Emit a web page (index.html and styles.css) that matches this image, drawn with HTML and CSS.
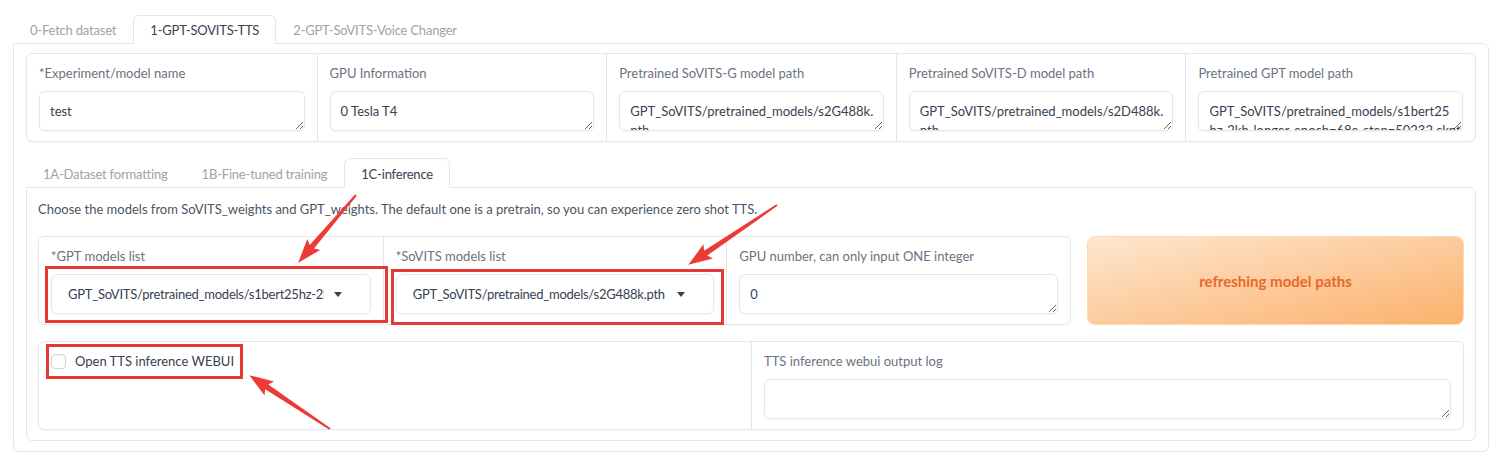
FILE: index.html
```html
<!DOCTYPE html>
<html lang="en">
<head>
  <meta charset="UTF-8" />
  <title>GPT-SoVITS WebUI</title>
  <link rel="stylesheet" href="styles.css">
</head>
<body>
  <div class="tab-nav">
    <button class="tab">0-Fetch dataset</button>
    <button class="tab selected">1-GPT-SOVITS-TTS</button>
    <button class="tab">2-GPT-SoVITS-Voice Changer</button>
  </div>

  <div class="tab-panel outer">
    <div class="block cols-5">
      <div class="field">
        <label>*Experiment/model name</label>
        <textarea>test</textarea>
      </div>
      <div class="field">
        <label>GPU Information</label>
        <textarea>0 Tesla T4</textarea>
      </div>
      <div class="field">
        <label>Pretrained SoVITS-G model path</label>
        <textarea>GPT_SoVITS/pretrained_models/s2G488k.
pth</textarea>
      </div>
      <div class="field">
        <label>Pretrained SoVITS-D model path</label>
        <textarea>GPT_SoVITS/pretrained_models/s2D488k.
pth</textarea>
      </div>
      <div class="field">
        <label>Pretrained GPT model path</label>
        <textarea>GPT_SoVITS/pretrained_models/s1bert25
hz-2kh-longer-epoch=68e-step=50232.ckpt</textarea>
      </div>
    </div>

    <div class="tab-nav inner-nav">
      <button class="tab">1A-Dataset formatting</button>
      <button class="tab">1B-Fine-tuned training</button>
      <button class="tab selected">1C-inference</button>
    </div>

    <div class="tab-panel inner">
      <p class="desc">Choose the models from SoVITS_weights and GPT_weights. The default one is a pretrain, so you can experience zero shot TTS.</p>

      <div class="model-row">
        <div class="block cols-3">
          <div class="field">
            <label>*GPT models list</label>
            <div class="dropdown">
              <span class="value">GPT_SoVITS/pretrained_models/s1bert25hz-2kh-longer-epoch=68e-step=50232.ckpt</span>
              <svg class="caret" width="8" height="5" viewBox="0 0 8 5"><path d="M0 0h8L4 5z" fill="#374151"/></svg>
            </div>
          </div>
          <div class="field">
            <label>*SoVITS models list</label>
            <div class="dropdown">
              <span class="value">GPT_SoVITS/pretrained_models/s2G488k.pth</span>
              <svg class="caret" width="8" height="5" viewBox="0 0 8 5"><path d="M0 0h8L4 5z" fill="#374151"/></svg>
            </div>
          </div>
          <div class="field">
            <label>GPU number, can only input ONE integer</label>
            <textarea>0</textarea>
          </div>
        </div>
        <button class="refresh">refreshing model paths</button>
      </div>

      <div class="block cols-2">
        <div class="field">
          <label class="check"><span class="box"></span>Open TTS inference WEBUI</label>
        </div>
        <div class="field">
          <label>TTS inference webui output log</label>
          <textarea></textarea>
        </div>
      </div>
    </div>
  </div>

  <!-- annotations drawn on top of the screenshot -->
  <svg class="marks" width="1500" height="465" viewBox="0 0 1500 465">
    <g fill="none" stroke="#e53935" stroke-width="3">
      <rect x="46.5" y="267.5" width="340" height="54"/>
      <rect x="392.5" y="270.5" width="330" height="53"/>
      <rect x="47.5" y="345.5" width="194" height="32"/>
    </g>
    <g fill="#ec3b36">
      <polygon transform="translate(356 195) rotate(130.5)" points="0,-1 68,-2.8 65,-8.5 89,0 65,8.5 68,2.8 0,1"/>
      <polygon transform="translate(777 205) rotate(146)" points="0,-1 86,-2.8 83,-8.5 107,0 83,8.5 86,2.8 0,1"/>
      <polygon transform="translate(330 429) rotate(-146.3)" points="0,-1 76,-2.8 73,-8.5 97,0 73,8.5 76,2.8 0,1"/>
    </g>
  </svg>
</body>
</html>
```

FILE: styles.css
```css
* { box-sizing: border-box; }
html, body {
  margin: 0;
  padding: 0;
}
body {
  position: relative;
  width: 1500px;
  height: 465px;
  overflow: hidden;
  padding: 15px 11px 0 13px;
  background: #fff;
  font-family: Lato, "Noto Sans", sans-serif;
  font-size: 13px;
  color: #374151;
}
.tab-nav {
  display: flex;
  height: 28px;
}
.tab {
  position: relative;
  z-index: 1;
  height: 29px;
  padding: 0 16px;
  font: inherit;
  letter-spacing: -0.2px;
  color: #9ca3af;
  background: none;
  border: 1px solid transparent;
  border-bottom: none;
  border-radius: 6px 6px 0 0;
}
.tab.selected {
  color: #374151;
  background: #fff;
  border-color: #e5e7eb;
}
.tab-panel {
  border: 1px solid #e5e7eb;
  border-radius: 0 6px 6px 6px;
}
.outer {
  padding: 9px 12px 10px 12px;
}
.inner-nav {
  margin-top: 16px;
  height: 29px;
}
.inner-nav .tab { height: 30px; }
.inner {
  display: flex;
  flex-direction: column;
  gap: 16px;
  padding: 11px 11px 10px 11px;
}
.desc {
  margin: 0;
  line-height: 21px;
  color: #4b5563;
}
.block {
  display: grid;
  border: 1px solid #e5e7eb;
  border-radius: 6px;
  background: #fff;
  box-shadow: 0 1px 2px rgba(0, 0, 0, 0.03);
}
.cols-5 { grid-template-columns: repeat(5, 1fr); }
.cols-3 { grid-template-columns: repeat(3, 1fr); }
.cols-2 { grid-template-columns: repeat(2, 1fr); }
.field {
  display: flex;
  flex-direction: column;
  gap: 8px;
  padding: 9px 12px 10px 12px;
  min-width: 0;
}
.field + .field { border-left: 1px solid #e5e7eb; }
.field label {
  line-height: 20px;
  color: #6b7280;
}
textarea {
  display: block;
  width: 100%;
  height: 40px;
  padding: 10px 10px 0 10px;
  font: inherit;
  line-height: 19px;
  color: #374151;
  border: 1px solid #e5e7eb;
  border-radius: 6px;
  box-shadow: 0 1px 2px rgba(0, 0, 0, 0.05);
  overflow: hidden;
  white-space: pre;
  resize: vertical;
  outline: none;
}
.model-row {
  display: grid;
  grid-template-columns: 1fr 377px;
  gap: 16px;
}
.dropdown {
  display: flex;
  align-items: center;
  gap: 10px;
  height: 40px;
  padding: 0 28px 0 16px;
  border: 1px solid #e5e7eb;
  border-radius: 6px;
  box-shadow: 0 1px 2px rgba(0, 0, 0, 0.05);
}
.dropdown .value {
  flex: 1;
  letter-spacing: -0.25px;
  white-space: nowrap;
  overflow: hidden;
}
.caret { flex: none; }
.refresh {
  font: inherit;
  font-size: 15px;
  font-weight: 700;
  color: #e9692a;
  background: linear-gradient(to bottom right, #fee7d0, #fbb16c);
  border: 1px solid #fcd9b4;
  border-radius: 8px;
}
.check {
  display: flex;
  align-items: center;
  gap: 9px;
  color: #374151 !important;
}
.box {
  width: 15px;
  height: 15px;
  border: 1px solid #d1d5db;
  border-radius: 4px;
  background: #fff;
  box-shadow: inset 0 1px 2px rgba(0, 0, 0, 0.05);
}
.marks {
  position: absolute;
  top: 0;
  left: 0;
  pointer-events: none;
}
```
